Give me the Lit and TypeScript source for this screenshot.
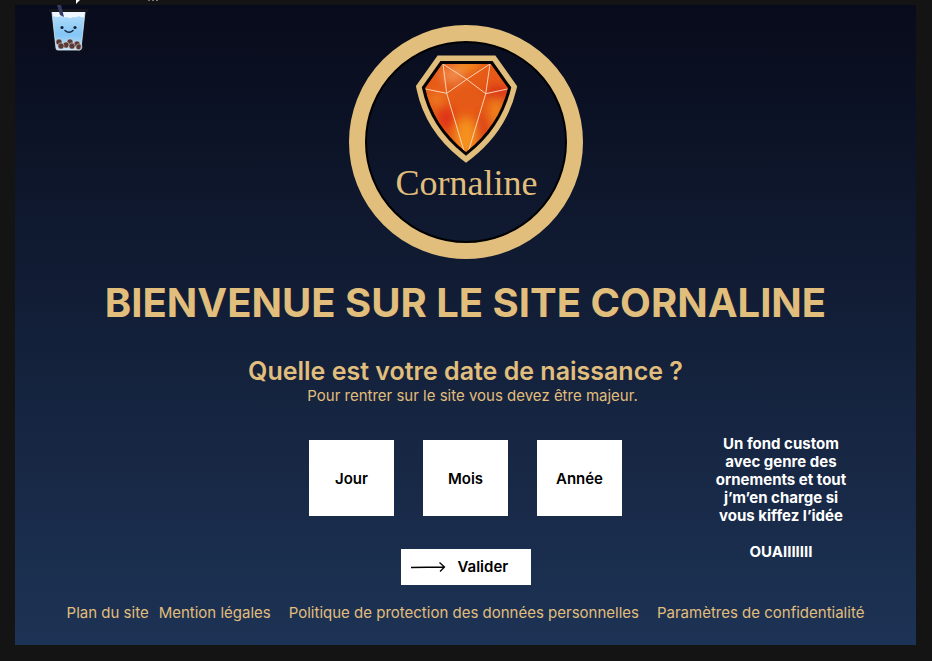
import { LitElement, html, svg, css } from "lit";
import { customElement } from "lit/decorators.js";

const GEM = "M93 39H142L159 63Q150 101 117 127Q84 101 76 63Z";

const gemGlows = [
  { x: 104, y: 50, rx: 12, ry: 9, fill: "#f08848" },
  { x: 118, y: 40, rx: 13, ry: 6, fill: "#f3901f" },
  { x: 88, y: 74, rx: 8, ry: 7, fill: "#ee7a20" },
  { x: 97, y: 93, rx: 8, ry: 12, fill: "#df3214" },
  { x: 117, y: 112, rx: 11, ry: 20, fill: "#f5921c" },
  { x: 149, y: 68, rx: 12, ry: 8, fill: "#d93417" },
  { x: 147, y: 86, rx: 6, ry: 13, fill: "#f0861c" },
  { x: 133, y: 105, rx: 4, ry: 18, fill: "#d8361a" },
];

const pearls = [
  [11, 42], [22, 42], [29, 44], [18, 45], [31, 47], [13, 46], [24, 46],
];

@customElement("cornaline-logo")
export class CornalineLogo extends LitElement {
  static styles = css`
    :host { display: block; width: 234px; height: 234px; }
    svg { display: block; }
    .name { font-family: "Baskerville", "Liberation Serif", serif; font-size: 36px; fill: #e1be7c; }
  `;

  render() {
    return html`
      <svg width="234" height="234" viewBox="0 0 234 234" role="img" aria-label="Cornaline">
        <defs>
          <clipPath id="gem"><path d=${GEM} /></clipPath>
          <filter id="soft" x="-100%" y="-100%" width="300%" height="300%">
            <feGaussianBlur stdDeviation="5" />
          </filter>
        </defs>
        <circle cx="117" cy="117" r="100.5" fill="none" stroke="#000" stroke-width="3" />
        <circle cx="117" cy="117" r="109" fill="none" stroke="#e1be7c" stroke-width="16" />
        <path d=${GEM} fill="none" stroke="#e1be7c" stroke-width="17" />
        <path d=${GEM} fill="#e85a18" stroke="#060406" stroke-width="6" />
        <g clip-path="url(#gem)">
          <path d=${GEM} fill="#e65a17" />
          <g filter="url(#soft)">
            ${gemGlows.map(
              (g) => svg`<ellipse cx=${g.x} cy=${g.y} rx=${g.rx} ry=${g.ry} fill=${g.fill} />`
            )}
          </g>
          <path
            d="M94 39L117.7 54.3L136.7 68.7L158.5 64M141 39L117.7 54.3L97.7 68.3L76.5 64M94 39L97.7 68.3L115 126M141 39L136.7 68.7L119.5 126"
            fill="none" stroke="#ffdcc0" stroke-width="0.9" />
        </g>
        <text class="name" x="117.5" y="170" text-anchor="middle">Cornaline</text>
      </svg>
    `;
  }
}

@customElement("bubble-tea")
export class BubbleTea extends LitElement {
  static styles = css`
    :host { display: block; }
    svg { display: block; }
  `;

  render() {
    return html`
      <svg width="112" height="54" viewBox="0 0 112 54" aria-hidden="true">
        <defs>
          <linearGradient id="tea" x1="0" y1="0" x2="0" y2="1">
            <stop offset="0" stop-color="#b5defa" />
            <stop offset="0.6" stop-color="#84c6f6" />
            <stop offset="1" stop-color="#c4e4fa" />
          </linearGradient>
        </defs>
        <path d="M28 0H32L28 4Z" fill="#fff" />
        <path d="M100 0h2M104 0h2M108 0h2" stroke="#777" stroke-width="2" />
        <path d="M1 9H40V12H38L34 51H7L3 12H1Z" fill="#15171d" />
        <path d="M4 12H37L33 48Q33 50 31 50H10Q8 50 8 48Z" fill="url(#tea)" />
        <path d="M4 12H37L36 17Q33 18 31 16Q28 18 25 17Q22 19 19 17Q16 18 13 16Q9 18 5 16Z" fill="#eef6ff" />
        <path d="M9 5L13 5L16 17L12 15Z" fill="#333b63" />
        <circle cx="14" cy="27.5" r="1.6" fill="#14233c" />
        <circle cx="27" cy="27.5" r="1.6" fill="#14233c" />
        <path d="M17 30.5Q21 34 25 30.5" fill="none" stroke="#14233c" stroke-width="1.5" stroke-linecap="round" />
        ${pearls.map(
          ([x, y]) => svg`<circle cx=${x} cy=${y} r="3.1" fill="#5b3a35" stroke="#dfe3ea" stroke-width="0.5" />`
        )}
        <path d="M4 12L8 48Q8 50 10 50H31Q33 50 33 48L37 12" fill="none" stroke="#d5ebfa" stroke-width="0.8" />
      </svg>
    `;
  }
}

@customElement("app-root")
export class AppRoot extends LitElement {
  static styles = css`
    * { box-sizing: border-box; }
    :host {
      display: flex;
      min-height: 100vh;
      box-sizing: border-box;
      padding: 5px 16px 16px 15px;
      position: relative;
      background: #141414;
      color: #e1be7c;
      font-family: "Inter", sans-serif;
      font-size: 15px;
      line-height: 18px;
    }
    .page {
      flex: 1;
      display: flex;
      flex-direction: column;
      align-items: center;
      padding: 20px 0;
      background: linear-gradient(#080b1b, #1d3355);
    }
    .mascot { position: absolute; top: 0; left: 48px; }
    h1, h2, p { margin: 0; text-align: center; }
    h1 { margin-top: 20px; font-size: 40px; line-height: 48px; font-weight: 700; }
    h2 { margin-top: 29px; font-size: 25px; line-height: 31px; font-weight: 600; }
    .hint { padding-left: 14px; }
    .entry {
      align-self: stretch;
      display: grid;
      grid-template-columns: 1fr auto 1fr;
      margin-top: 30px;
    }
    form {
      grid-column: 2;
      display: flex;
      flex-direction: column;
      align-items: center;
      gap: 33px;
      padding-top: 5px;
    }
    .fields { display: flex; gap: 29px; }
    input, button {
      border: 0;
      border-radius: 0;
      background: #fff;
      color: #000;
      font: inherit;
      font-weight: 600;
    }
    input { width: 85px; height: 76px; padding: 0; text-align: center; }
    input::placeholder { color: #000; opacity: 1; }
    button {
      display: flex;
      align-items: center;
      gap: 12px;
      width: 130px;
      height: 36px;
      padding: 0 10px;
    }
    .note {
      justify-self: center;
      width: 136px;
      margin-left: 24px;
      color: #fff;
      font-weight: 700;
    }
    .note p + p { margin-top: 18px; }
    footer, .site-links { display: flex; flex-wrap: wrap; justify-content: center; }
    footer { margin-top: 19px; gap: 0 18px; }
    .site-links { gap: 0 10px; }
    a { color: inherit; text-decoration: none; }
  `;

  render() {
    return html`
      <main class="page">
        <cornaline-logo></cornaline-logo>
        <h1>BIENVENUE SUR LE SITE CORNALINE</h1>
        <h2>Quelle est votre date de naissance ?</h2>
        <p class="hint">Pour rentrer sur le site vous devez être majeur.</p>
        <section class="entry">
          <form @submit=${(e: Event) => e.preventDefault()}>
            <div class="fields">
              ${["Jour", "Mois", "Année"].map(
                (label) => html`<input type="text" inputmode="numeric" placeholder=${label} aria-label=${label} />`
              )}
            </div>
            <button type="submit">
              <svg width="35" height="12" viewBox="0 0 35 12" fill="none" stroke="#000" stroke-width="1.3" aria-hidden="true">
                <path d="M0 6.5L33 6M28.5 1.5L33.5 6L29 10.5" />
              </svg>
              Valider
            </button>
          </form>
          <aside class="note">
            <p>Un fond custom avec genre des ornements et tout j’m’en charge si vous kiffez l’idée</p>
            <p>OUAIIIIIII</p>
          </aside>
        </section>
        <footer>
          <div class="site-links">
            <a href="#plan">Plan du site</a>
            <a href="#mentions">Mention légales</a>
          </div>
          <a href="#protection">Politique de protection des données personnelles</a>
          <a href="#parametres">Paramètres de confidentialité</a>
        </footer>
      </main>
      <bubble-tea class="mascot"></bubble-tea>
    `;
  }
}
